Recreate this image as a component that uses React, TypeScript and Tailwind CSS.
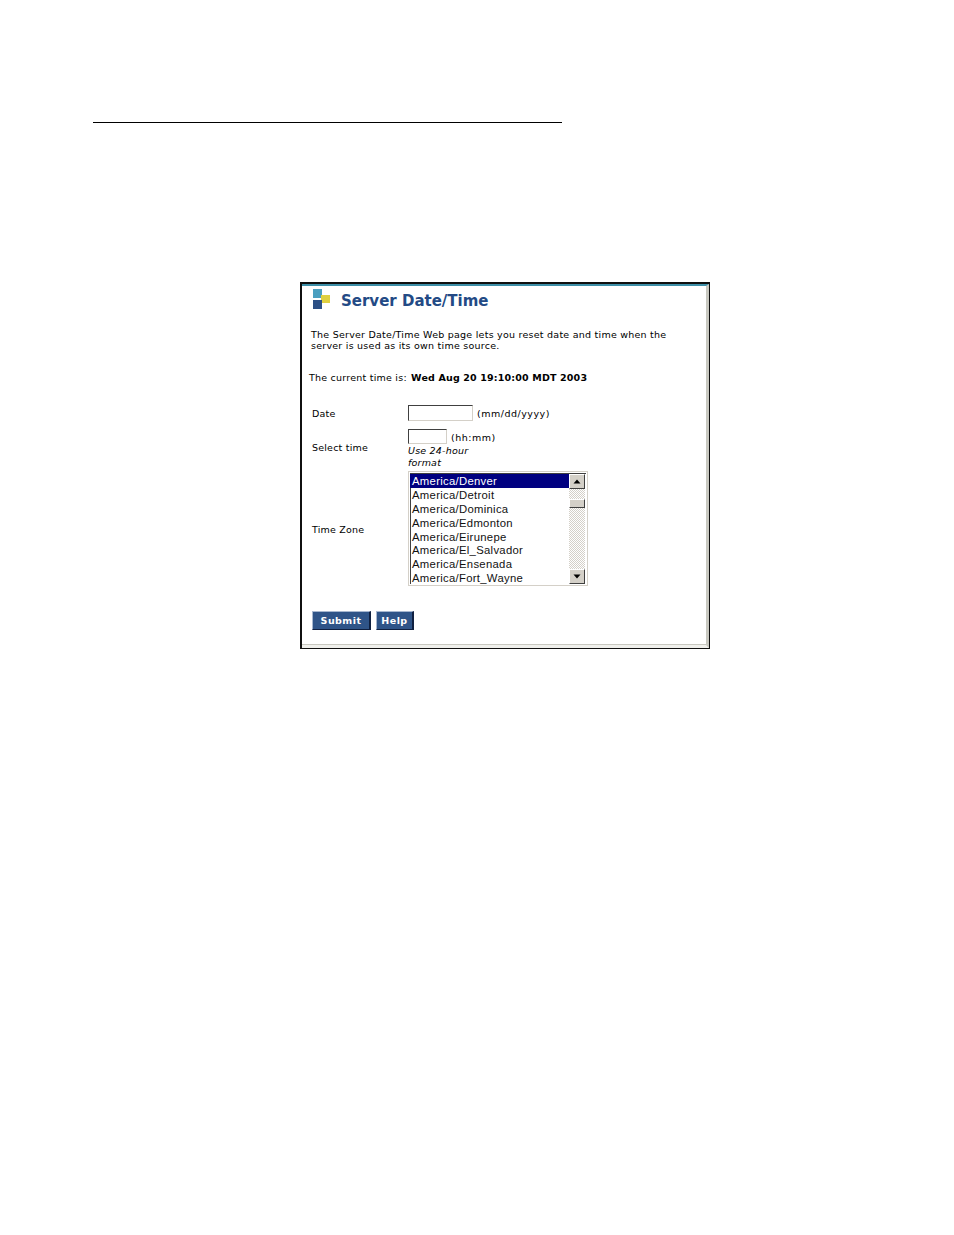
import React from "react";

const zones = ["America/Detroit","America/Dominica","America/Edmonton","America/Eirunepe","America/El_Salvador","America/Ensenada","America/Fort_Wayne"];

function Arrow({ up }: { up?: boolean }) {
  return (
    <div className="w-[16px] h-[15px] bg-[#d4d0c8] border border-t-white border-l-white border-r-[#404040] border-b-[#404040] flex items-center justify-center">
      <svg width="8" height="5" viewBox="0 0 8 5">
        <path d={up ? "M4 0.5 L7.5 4.5 L0.5 4.5 Z" : "M4 4.5 L7.5 0.5 L0.5 0.5 Z"} fill="#000" />
      </svg>
    </div>
  );
}

export default function App() {
  return (
    <div className="w-[954px] h-[1235px] bg-white pt-[122px] pl-[93px] font-['DejaVu_Sans',sans-serif] text-black overflow-hidden">
      <div className="w-[469px] h-px bg-black" />
      <div className="ml-[207px] mt-[159px] w-[410px] h-[367px] border border-[#101010] border-t-2 border-l-2 flex flex-col">
        <div className="flex-1 border-t-2 border-t-[#3d8fa8] border-r-[3px] border-r-[#c8c8c0] border-b-[3px] border-b-[#f0f0ec] flex flex-col">
          <div className="flex-1 border-b border-b-[#c8c8c0] pl-[10px] flex flex-col">
            <div className="flex items-start">
              <svg width="20" height="22" viewBox="0 0 20 22" className="mt-[2px] shrink-0">
                <rect x="1" y="1" width="9" height="9" fill="#4a9fc0" />
                <rect x="9" y="7" width="9" height="8" fill="#e0d040" />
                <rect x="1" y="12" width="9" height="9" fill="#2c4f85" />
              </svg>
              <div className="ml-[9px] mt-[5px] text-[15px] leading-[20px] font-bold text-[#234a85] tracking-[0px]">Server Date/Time</div>
            </div>
            <p className="mt-[18px] -ml-px text-[9.5px] leading-[11px] tracking-[0.24px] whitespace-pre-line">
              {"The Server Date/Time Web page lets you reset date and time when the\nserver is used as its own time source."}
            </p>
            <p className="mt-[21px] ml-[-3px] text-[9.5px] leading-[11px] tracking-[0.23px]">
              The current time is: <b className="font-bold ml-[1px] tracking-[0.16px]">Wed Aug 20 19:10:00 MDT 2003</b>
            </p>
            <div className="mt-[22px] flex">
              <div className="w-[96px] flex flex-col text-[9.5px] leading-[11px] tracking-[0.2px]">
                <div className="h-[16px] flex items-center">Date</div>
                <div className="mt-[18px] h-[16px] flex items-center">Select time</div>
                <div className="mt-[66px] h-[16px] flex items-center">Time Zone</div>
              </div>
              <div className="flex flex-col text-[9.5px] tracking-[0.5px]">
                <div className="flex items-center h-[16px]">
                  <div className="w-[65px] h-[16px] border border-[#d4d0c8] border-t-[#404040] border-l-[#404040]" />
                  <span className="ml-[4px] pt-[3px]">(mm/dd/yyyy)</span>
                </div>
                <div className="mt-[8px] flex items-center h-[15px]">
                  <div className="w-[39px] h-[15px] border border-[#d4d0c8] border-t-[#404040] border-l-[#404040]" />
                  <span className="ml-[4px] pt-[3px]">(hh:mm)</span>
                </div>
                <div className="mt-[1px] italic leading-[11.5px] tracking-[0.2px]">Use 24-hour<br />format</div>
                <div className="mt-[3px] w-[180px] h-[115px] border border-[#d4d0c8] p-px flex">
                  <div className="border-l border-t border-[#404040] flex-1 flex">
                    <div className="flex-1 text-[11.3px] leading-[13.85px] tracking-[0.3px] font-['Liberation_Sans',sans-serif] text-[#111]">
                      <div className="bg-[#000080] text-white pl-[2px] h-[14px] -ml-px leading-[15px]">America/Denver</div>
                      {zones.map((z) => <div key={z} className="pl-[2px] -ml-px translate-y-[0.5px]">{z}</div>)}
                    </div>
                    <div className="w-[16px] mr-px flex flex-col bg-[repeating-conic-gradient(#d4d0c8_0_25%,#ffffff_0_50%)] bg-[length:2px_2px]">
                      <Arrow up />
                      <div className="h-[9px] mt-[10px] bg-[#d4d0c8] border border-t-white border-l-white border-r-[#404040] border-b-[#404040]" />
                      <div className="flex-1" />
                      <Arrow />
                    </div>
                  </div>
                </div>
              </div>
            </div>
            <div className="mt-[25px] flex gap-[5px] text-[9.5px] font-bold text-white tracking-[0.45px]">
              <div className="w-[59px] h-[19px] pt-px bg-[#2f5488] border-t border-l border-t-[#a8b8d0] border-l-[#a8b8d0] border-r-2 border-b border-r-[#102040] border-b-[#102040] flex items-center justify-center">Submit</div>
              <div className="w-[38px] h-[19px] pt-px bg-[#2f5488] border-t border-l border-t-[#a8b8d0] border-l-[#a8b8d0] border-r-2 border-b border-r-[#102040] border-b-[#102040] flex items-center justify-center">Help</div>
            </div>
          </div>
        </div>
      </div>
    </div>
  );
}
